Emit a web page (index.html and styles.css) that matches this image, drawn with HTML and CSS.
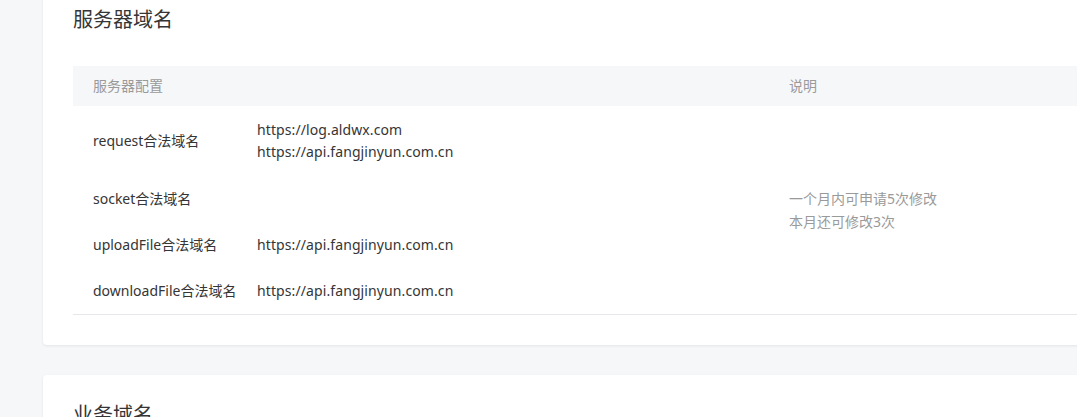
FILE: index.html
```html
<!DOCTYPE html>
<html lang="zh-CN">
<head>
<meta charset="utf-8">
<title>服务器域名</title>
<link rel="stylesheet" href="styles.css">
</head>
<body>
<div class="page">
  <section class="card card-first">
    <h2 class="card-title">服务器域名</h2>
    <table class="domain-table">
      <thead>
        <tr>
          <th class="col-name">服务器配置</th>
          <th class="col-value"></th>
          <th class="col-desc">说明</th>
        </tr>
      </thead>
      <tbody>
        <tr class="row-tall">
          <td class="cell-name">request合法域名</td>
          <td class="cell-value">
            <div>https://log.aldwx.com</div>
            <div>https://api.fangjinyun.com.cn</div>
          </td>
          <td class="cell-desc" rowspan="4">
            <div>一个月内可申请5次修改</div>
            <div>本月还可修改3次</div>
          </td>
        </tr>
        <tr>
          <td class="cell-name">socket合法域名</td>
          <td class="cell-value"></td>
        </tr>
        <tr>
          <td class="cell-name">uploadFile合法域名</td>
          <td class="cell-value">https://api.fangjinyun.com.cn</td>
        </tr>
        <tr>
          <td class="cell-name">downloadFile合法域名</td>
          <td class="cell-value">https://api.fangjinyun.com.cn</td>
        </tr>
      </tbody>
    </table>
  </section>
  <section class="card card-second">
    <h2 class="card-title">业务域名</h2>
  </section>
</div>
</body>
</html>
```

FILE: styles.css
```css
html, body {
  margin: 0;
  padding: 0;
  background: #f6f7f9;
  overflow: hidden;
  height: 417px;
}
body {
  font-family: "Segoe UI", "Noto Sans", "Noto Sans CJK SC", sans-serif;
  color: #353535;
  font-size: 14px;
}
.page {
  padding-left: 43px;
  margin-top: -20px;
  width: 1160px;
}
.card {
  background: #fff;
  border-radius: 4px;
  box-shadow: 0 1px 3px rgba(0, 0, 0, 0.08);
  padding: 0 30px;
}
.card-first {
  padding-top: 26px;
  padding-bottom: 30px;
}
.card-second {
  margin-top: 30px;
  padding-top: 26px;
  height: 80px;
}
.card-title {
  margin: 0;
  font-size: 20px;
  font-weight: 400;
  line-height: 28px;
  color: #353535;
}
.domain-table {
  margin-top: 32px;
  width: 100%;
  border-collapse: collapse;
}
.domain-table th {
  background: #f6f7f9;
  color: #9a9a9a;
  font-weight: 400;
  text-align: left;
  height: 40px;
  padding: 0;
  line-height: 20px;
}
.col-name { padding-left: 20px !important; width: 164px; }
.col-value { width: 532px; }
.domain-table td {
  padding: 12px 0;
  line-height: 22px;
  vertical-align: middle;
}
.domain-table tbody tr:last-child td {
  border-bottom: 1px solid #e7e7eb;
}
.cell-value {
  letter-spacing: 0.1px;
}
.cell-desc {
  border-bottom: 1px solid #e7e7eb;
  color: #9a9a9a;
  line-height: 23px !important;
}
.cell-name {
  padding-left: 20px !important;
  white-space: nowrap;
}
.row-tall td.cell-name,
.row-tall td.cell-value {
  padding: 13px 0;
}
.row-tall td.cell-name { padding-left: 20px; }
```
